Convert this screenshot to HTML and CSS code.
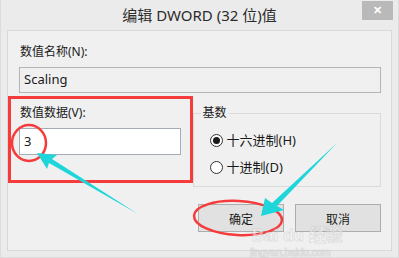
FILE: index.html
```html
<!DOCTYPE html>
<html lang="zh-CN">
<head>
    <meta charset="UTF-8">
    <title>编辑 DWORD (32 位)值</title>
    <link rel="stylesheet" href="styles.css">
</head>
<body>
    <div class="window">
        <div class="titlebar">
            <span></span>
            <div class="title">编辑 DWORD (32 位)值</div>
            <button class="close-btn">&#x2715;</button>
        </div>
        <div class="panel">
            <div class="field-label">数值名称(N):</div>
            <div class="input readonly">Scaling</div>

            <div class="data-row">
                <div class="data-col">
                    <div class="field-label">数值数据(V):</div>
                    <div class="input value">3</div>
                </div>
                <fieldset class="base-group">
                    <legend>基数</legend>
                    <label class="radio"><span class="dot checked"></span>十六进制(H)</label>
                    <label class="radio"><span class="dot"></span>十进制(D)</label>
                </fieldset>
            </div>

            <div class="buttons">
                <button class="btn">确定</button>
                <button class="btn">取消</button>
            </div>
        </div>

        <!-- annotations drawn over the dialog -->
        <svg class="marks" width="399" height="258" viewBox="0 0 399 258">
            <rect x="9.5" y="97.5" width="182" height="84" fill="none" stroke="#f53b3b" stroke-width="3"/>
            <ellipse cx="29" cy="143" rx="17" ry="18" fill="none" stroke="#f53b3b" stroke-width="2.5"/>
            <ellipse cx="238" cy="218" rx="44" ry="17" fill="none" stroke="#f53b3b" stroke-width="2.5" transform="rotate(3 238 218)"/>
            <polygon points="37,153 57,155 52,159 138,214 49,163 47,169" fill="#1ed6da"/>
            <polygon points="261,216 265,198 272,203 337,143 277,206 284,210" fill="#1ed6da"/>
            <text x="252" y="241" class="wm">Bai du 经验</text>
            <text x="250" y="256" class="wm small">jingyan.baidu.com</text>
        </svg>
    </div>
</body>
</html>
```

FILE: styles.css
```css
body {
    margin: 0;
    background-color: #ebebeb;
    font-family: "Noto Sans", "Noto Sans CJK SC", sans-serif;
    color: #1a1a1a;
}
.window {
    position: relative;
    width: 399px;
    height: 258px;
    box-sizing: border-box;
    border-left: 1px solid #dcdcdc;
    border-right: 1px solid #dcdcdc;
    border-bottom: 1px solid #dcdcdc;
    background-color: #ebebeb;
}
.titlebar {
    display: grid;
    grid-template-columns: 1fr auto 1fr;
    height: 30px;
}
.title {
    font-size: 15px;
    line-height: 30px;
    color: #2b2b2b;
}
.close-btn {
    justify-self: end;
    width: 31px;
    height: 19px;
    margin: 1px 5px 0 0;
    padding: 0;
    border: none;
    background-color: #b9b9b9;
    color: white;
    font-size: 11px;
    font-weight: bold;
    line-height: 19px;
}
.panel {
    margin-left: 6px;
    width: 385px;
    height: 221px;
    box-sizing: border-box;
    border: 1px solid #d9d9d9;
    background-color: #f0f0f0;
    padding: 13px 10px 0 11px;
}
.field-label {
    font-size: 12px;
    line-height: 16px;
    padding-left: 1px;
}
.input {
    margin-top: 7px;
    height: 26px;
    box-sizing: border-box;
    border: 1px solid #b4b4b4;
    padding-left: 4px;
    font-size: 13px;
    line-height: 23px;
}
.input.readonly {
    background-color: #f0f0f0;
}
.input.value {
    height: 27px;
    background-color: white;
    border-color: #a5acb5;
    line-height: 24px;
}
.data-row {
    display: flex;
    gap: 12px;
    margin-top: 12px;
}
.data-col {
    width: 162px;
}
.base-group {
    margin: 0;
    width: 189px;
    height: 82px;
    box-sizing: border-box;
    border: 1px solid #dadada;
    padding: 11px 0 0 16px;
    display: flex;
    flex-direction: column;
    gap: 10px;
}
.base-group legend {
    font-size: 12px;
    line-height: 16px;
    padding: 0 2px;
    margin-left: -9px;
}
.radio {
    display: flex;
    align-items: center;
    gap: 4px;
    font-size: 13px;
    line-height: 17px;
}
.dot {
    width: 13px;
    height: 13px;
    box-sizing: border-box;
    border: 1px solid #333;
    border-radius: 50%;
    background-color: white;
    display: flex;
    align-items: center;
    justify-content: center;
}
.dot.checked::after {
    content: "";
    width: 7px;
    height: 7px;
    border-radius: 50%;
    background-color: #1a1a1a;
}
.buttons {
    display: flex;
    justify-content: flex-end;
    gap: 11px;
    margin-top: 17px;
}
.btn {
    width: 86px;
    height: 28px;
    border: 1px solid #adadad;
    background-color: #e1e1e1;
    font-family: "Noto Sans CJK SC", sans-serif;
    font-size: 12px;
    color: #1a1a1a;
    padding: 0;
}
.marks {
    position: absolute;
    left: -1px;
    top: 0;
    pointer-events: none;
}
.wm {
    font-family: "Liberation Sans", "Noto Sans CJK SC", sans-serif;
    font-size: 17px;
    font-weight: bold;
    fill: rgba(255, 255, 255, 0.5);
    stroke: rgba(170, 170, 170, 0.3);
    stroke-width: 1;
}
.wm.small {
    font-size: 10px;
    font-weight: normal;
}
```
